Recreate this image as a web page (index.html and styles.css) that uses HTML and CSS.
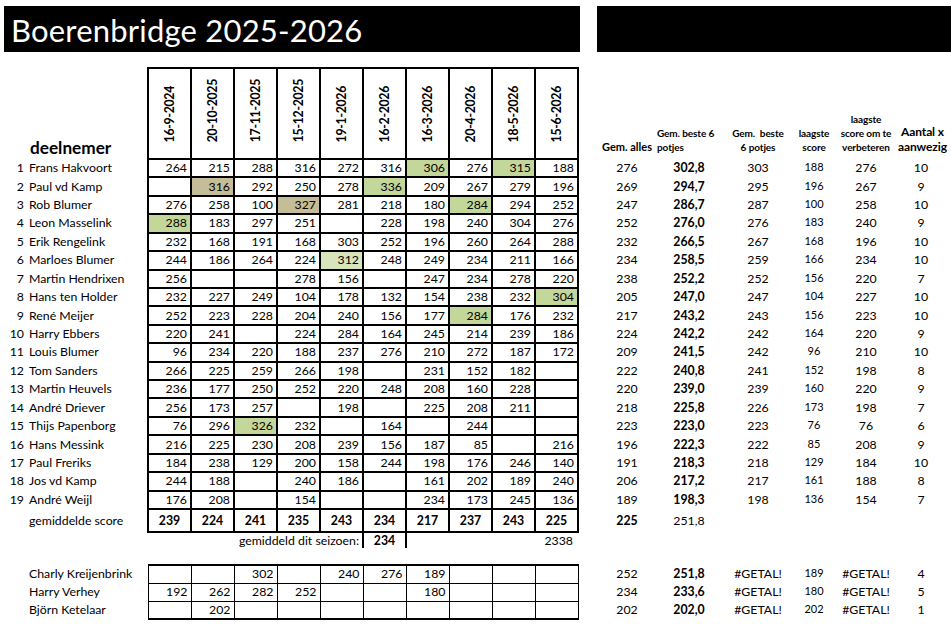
FILE: index.html
```html
<!DOCTYPE html>
<html lang="nl">
<head>
<meta charset="utf-8">
<title>Boerenbridge 2025-2026</title>
<link rel="stylesheet" href="styles.css">
</head>
<body>
<div class="top">
  <div class="title">Boerenbridge 2025-2026</div>
  <div class="blackbar"></div>
</div>
<table class="sheet">
  <colgroup>
    <col class="w-num"><col class="w-name">
    <col class="w-day"><col class="w-day"><col class="w-day"><col class="w-day"><col class="w-day">
    <col class="w-day"><col class="w-day"><col class="w-day"><col class="w-day"><col class="w-day">
    <col class="w-gap">
    <col class="w-r1"><col class="w-r2"><col class="w-r3"><col class="w-r4"><col class="w-r5"><col class="w-r6">
  </colgroup>
  <tr class="head">
    <td></td>
    <td class="deel">deelnemer</td>
    <td class="date"><div><span>16-9-2024</span></div></td>
    <td class="date"><div><span>20-10-2025</span></div></td>
    <td class="date"><div><span>17-11-2025</span></div></td>
    <td class="date"><div><span>15-12-2025</span></div></td>
    <td class="date"><div><span>19-1-2026</span></div></td>
    <td class="date"><div><span>16-2-2026</span></div></td>
    <td class="date"><div><span>16-3-2026</span></div></td>
    <td class="date"><div><span>20-4-2026</span></div></td>
    <td class="date"><div><span>18-5-2026</span></div></td>
    <td class="date"><div><span>15-6-2026</span></div></td>
    <td></td>
    <td class="rh"><span class="lbl">Gem. alles</span></td>
    <td class="rh left"><span class="sm">Gem. beste 6<br>potjes</span></td>
    <td class="rh"><span class="sm">Gem.&nbsp; beste<br>6 potjes</span></td>
    <td class="rh"><span class="sm">laagste<br>score</span></td>
    <td class="rh"><span class="sm">laagste<br>score om te<br>verbeteren</span></td>
    <td class="rh"><span class="big">Aantal x<br>aanwezig</span></td>
  </tr>
  <tr class="d"><td>1</td><td>Frans Hakvoort</td><td>264</td><td>215</td><td>288</td><td>316</td><td>272</td><td>316</td><td class="g">306</td><td>276</td><td class="g">315</td><td>188</td><td></td><td>276</td><td>302,8</td><td>303</td><td>188</td><td>276</td><td>10</td></tr>
  <tr class="d"><td>2</td><td>Paul vd Kamp</td><td></td><td class="t">316</td><td>292</td><td>250</td><td>278</td><td class="g">336</td><td>209</td><td>267</td><td>279</td><td>196</td><td></td><td>269</td><td>294,7</td><td>295</td><td>196</td><td>267</td><td>9</td></tr>
  <tr class="d"><td>3</td><td>Rob Blumer</td><td>276</td><td>258</td><td>100</td><td class="t">327</td><td>281</td><td>218</td><td>180</td><td class="g">284</td><td>294</td><td>252</td><td></td><td>247</td><td>286,7</td><td>287</td><td>100</td><td>258</td><td>10</td></tr>
  <tr class="d"><td>4</td><td>Leon Masselink</td><td class="g">288</td><td>183</td><td>297</td><td>251</td><td></td><td>228</td><td>198</td><td>240</td><td>304</td><td>276</td><td></td><td>252</td><td>276,0</td><td>276</td><td>183</td><td>240</td><td>9</td></tr>
  <tr class="d"><td>5</td><td>Erik Rengelink</td><td>232</td><td>168</td><td>191</td><td>168</td><td>303</td><td>252</td><td>196</td><td>260</td><td>264</td><td>288</td><td></td><td>232</td><td>266,5</td><td>267</td><td>168</td><td>196</td><td>10</td></tr>
  <tr class="d"><td>6</td><td>Marloes Blumer</td><td>244</td><td>186</td><td>264</td><td>224</td><td class="lg">312</td><td>248</td><td>249</td><td>234</td><td>211</td><td>166</td><td></td><td>234</td><td>258,5</td><td>259</td><td>166</td><td>234</td><td>10</td></tr>
  <tr class="d"><td>7</td><td>Martin Hendrixen</td><td>256</td><td></td><td></td><td>278</td><td>156</td><td></td><td>247</td><td>234</td><td>278</td><td>220</td><td></td><td>238</td><td>252,2</td><td>252</td><td>156</td><td>220</td><td>7</td></tr>
  <tr class="d"><td>8</td><td>Hans ten Holder</td><td>232</td><td>227</td><td>249</td><td>104</td><td>178</td><td>132</td><td>154</td><td>238</td><td>232</td><td class="g">304</td><td></td><td>205</td><td>247,0</td><td>247</td><td>104</td><td>227</td><td>10</td></tr>
  <tr class="d"><td>9</td><td>René Meijer</td><td>252</td><td>223</td><td>228</td><td>204</td><td>240</td><td>156</td><td>177</td><td class="g">284</td><td>176</td><td>232</td><td></td><td>217</td><td>243,2</td><td>243</td><td>156</td><td>223</td><td>10</td></tr>
  <tr class="d"><td>10</td><td>Harry Ebbers</td><td>220</td><td>241</td><td></td><td>224</td><td>284</td><td>164</td><td>245</td><td>214</td><td>239</td><td>186</td><td></td><td>224</td><td>242,2</td><td>242</td><td>164</td><td>220</td><td>9</td></tr>
  <tr class="d"><td>11</td><td>Louis Blumer</td><td>96</td><td>234</td><td>220</td><td>188</td><td>237</td><td>276</td><td>210</td><td>272</td><td>187</td><td>172</td><td></td><td>209</td><td>241,5</td><td>242</td><td>96</td><td>210</td><td>10</td></tr>
  <tr class="d"><td>12</td><td>Tom Sanders</td><td>266</td><td>225</td><td>259</td><td>266</td><td>198</td><td></td><td>231</td><td>152</td><td>182</td><td></td><td></td><td>222</td><td>240,8</td><td>241</td><td>152</td><td>198</td><td>8</td></tr>
  <tr class="d"><td>13</td><td>Martin Heuvels</td><td>236</td><td>177</td><td>250</td><td>252</td><td>220</td><td>248</td><td>208</td><td>160</td><td>228</td><td></td><td></td><td>220</td><td>239,0</td><td>239</td><td>160</td><td>220</td><td>9</td></tr>
  <tr class="d"><td>14</td><td>André Driever</td><td>256</td><td>173</td><td>257</td><td></td><td>198</td><td></td><td>225</td><td>208</td><td>211</td><td></td><td></td><td>218</td><td>225,8</td><td>226</td><td>173</td><td>198</td><td>7</td></tr>
  <tr class="d"><td>15</td><td>Thijs Papenborg</td><td>76</td><td>296</td><td class="g">326</td><td>232</td><td></td><td>164</td><td></td><td>244</td><td></td><td></td><td></td><td>223</td><td>223,0</td><td>223</td><td>76</td><td>76</td><td>6</td></tr>
  <tr class="d"><td>16</td><td>Hans Messink</td><td>216</td><td>225</td><td>230</td><td>208</td><td>239</td><td>156</td><td>187</td><td>85</td><td></td><td>216</td><td></td><td>196</td><td>222,3</td><td>222</td><td>85</td><td>208</td><td>9</td></tr>
  <tr class="d"><td>17</td><td>Paul Freriks</td><td>184</td><td>238</td><td>129</td><td>200</td><td>158</td><td>244</td><td>198</td><td>176</td><td>246</td><td>140</td><td></td><td>191</td><td>218,3</td><td>218</td><td>129</td><td>184</td><td>10</td></tr>
  <tr class="d"><td>18</td><td>Jos vd Kamp</td><td>244</td><td>188</td><td></td><td>240</td><td>186</td><td></td><td>161</td><td>202</td><td>189</td><td>240</td><td></td><td>206</td><td>217,2</td><td>217</td><td>161</td><td>188</td><td>8</td></tr>
  <tr class="d"><td>19</td><td>André Weijl</td><td>176</td><td>208</td><td></td><td>154</td><td></td><td></td><td>234</td><td>173</td><td>245</td><td>136</td><td></td><td>189</td><td>198,3</td><td>198</td><td>136</td><td>154</td><td>7</td></tr>
  <tr class="avg"><td></td><td>gemiddelde score</td><td>239</td><td>224</td><td>241</td><td>235</td><td>243</td><td>234</td><td>217</td><td>237</td><td>243</td><td>225</td><td></td><td>225</td><td>251,8</td><td></td><td></td><td></td><td></td></tr>
  <tr class="season"><td colspan="2"></td><td colspan="5" class="s-label">gemiddeld dit seizoen:</td><td class="s-val">234</td><td colspan="4" class="s-total">2338</td><td colspan="7"></td></tr>
  <tr class="spacer"><td colspan="19"></td></tr>
  <tr class="x first"><td></td><td>Charly Kreijenbrink</td><td></td><td></td><td>302</td><td></td><td>240</td><td>276</td><td>189</td><td></td><td></td><td></td><td></td><td>252</td><td>251,8</td><td>#GETAL!</td><td>189</td><td>#GETAL!</td><td>4</td></tr>
  <tr class="x"><td></td><td>Harry Verhey</td><td>192</td><td>262</td><td>282</td><td>252</td><td></td><td></td><td>180</td><td></td><td></td><td></td><td></td><td>234</td><td>233,6</td><td>#GETAL!</td><td>180</td><td>#GETAL!</td><td>5</td></tr>
  <tr class="x last"><td></td><td>Björn Ketelaar</td><td></td><td>202</td><td></td><td></td><td></td><td></td><td></td><td></td><td></td><td></td><td></td><td>202</td><td>202,0</td><td>#GETAL!</td><td>202</td><td>#GETAL!</td><td>1</td></tr>
</table>
</body>
</html>
```
FILE: styles.css
```css
* { box-sizing: border-box; }

body {
  margin: 0;
  background: #fff;
  color: #000;
  font-family: Lato, "Open Sans", sans-serif;
}

.top {
  display: flex;
  gap: 17px;
  padding: 6px 0 0 4px;
}

.title {
  width: 576px;
  height: 46px;
  background: #000;
  color: #fff;
  font-size: 31px;
  line-height: 48px;
  padding-left: 7px;
  letter-spacing: 0.2px;
}

.blackbar {
  flex: 1;
  height: 46px;
  background: #000;
}

.sheet {
  margin-top: 15px;
  border-collapse: collapse;
  table-layout: fixed;
  width: 944px;
}

.w-num { width: 26px; }
.w-name { width: 122px; }
.w-day { width: 43px; }
.w-gap { width: 20px; }
.w-r1 { width: 58px; }
.w-r2 { width: 66px; }
.w-r3 { width: 72px; }
.w-r4 { width: 40px; }
.w-r5 { width: 64px; }
.w-r6 { width: 46px; }

.sheet td {
  padding: 0;
  font-size: 12.3px;
  line-height: 14px;
  white-space: nowrap;
}

/* header row */
.head { height: 91px; }
.head td { vertical-align: bottom; }
.sheet td.deel {
  font-size: 17.2px;
  font-weight: 700;
  line-height: 20px;
  padding: 0 0 1px 4px;
}
.sheet td.date {
  border: 2px solid #000;
  padding-bottom: 16px;
}
.date div {
  display: flex;
  justify-content: center;
}
.date span {
  writing-mode: vertical-rl;
  transform: rotate(180deg);
  font-size: 12.3px;
  font-weight: 700;
  line-height: 14px;
  letter-spacing: -0.3px;
}
.sheet td.rh {
  text-align: center;
  font-weight: 700;
  padding-bottom: 5px;
}
.sheet td.rh.left { text-align: left; padding-left: 1px; }
.rh .sm { font-size: 10px; line-height: 14px; letter-spacing: -0.1px; display: inline-block; }
.rh .lbl { font-size: 11px; line-height: 14px; display: inline-block; }
.rh .big { font-size: 12px; line-height: 15px; display: inline-block; letter-spacing: -0.1px; }

/* data rows */
.d { height: 18.43px; }
.avg { height: 23px; }
.x { height: 18px; }

.d td:nth-child(1),
.x td:nth-child(1) { text-align: right; padding-right: 2px; }
.d td:nth-child(2),
.x td:nth-child(2),
.avg td:nth-child(2) { padding-left: 3px; }

.d td:nth-child(n+3):nth-child(-n+12) {
  border: 2px solid #000;
  text-align: right;
  padding-right: 3px;
}
.d td:nth-child(12) { text-align: center; padding-right: 0; }

.avg td:nth-child(n+3):nth-child(-n+12) {
  border: 2px solid #000;
  text-align: center;
  font-weight: 700;
}

.x td:nth-child(n+3):nth-child(-n+12) {
  border: 1px solid #000;
  text-align: right;
  padding-right: 3px;
}
.x td:nth-child(3) { border-left-width: 2px; }
.x td:nth-child(12) { border-right-width: 2px; }
.x.first td:nth-child(n+3):nth-child(-n+12) { border-top-width: 2px; }
.x.last td:nth-child(n+3):nth-child(-n+12) { border-bottom-width: 2px; }

/* right panel */
.d td:nth-child(n+14),
.x td:nth-child(n+14),
.avg td:nth-child(n+14) { text-align: center; }
.d td:nth-child(15),
.x td:nth-child(15),
.avg td:nth-child(14) { font-weight: 700; }
.d td:nth-child(17),
.x td:nth-child(17) { font-size: 11px; padding-bottom: 2px; }

/* highlights */
.sheet td.g { background: #c4d79b; }
.sheet td.t { background: #c4bd97; }
.sheet td.lg { background: #d8e4bc; }

/* season row */
.season { height: 16px; }
.sheet td.s-label { text-align: right; padding-right: 3px; }
.sheet td.s-val {
  text-align: center;
  font-weight: 700;
  border-left: 2px solid #000;
  border-right: 2px solid #000;
}
.sheet td.s-total { text-align: right; padding-right: 5px; }
.spacer { height: 17px; }
```
